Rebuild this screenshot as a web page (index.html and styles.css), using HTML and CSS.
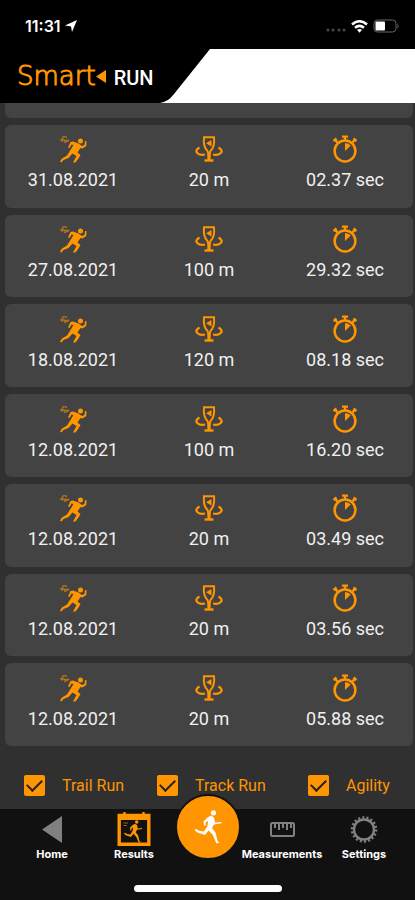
FILE: index.html
```
<!DOCTYPE html>
<html lang="en">
<head>
    <meta charset="UTF-8">
    <meta name="viewport" content="width=device-width, initial-scale=1.0">
    <title>Smart Run - Results</title>
    <link rel="stylesheet" href="styles.css">
</head>
<body>
    <!-- Shared icons -->
    <svg class="sprite" aria-hidden="true">
        <symbol id="runner" viewBox="0 0 28 28">
            <circle cx="21.500" cy="6" r="2.500" fill="currentColor"/>
            <path d="M11.500 7L14 6.500L19.500 8.500L23 11L25.500 10L26 6L27.500 6.300L27.300 11L23.500 13.500L21.500 13L18.500 17.500L21.500 20L19.500 23.500L16.500 27.500L14 27.500L17.500 21L13.500 18.500L9.500 23L4.500 25L2.500 27.500L1 26.500L3 23.500L8 20.500L11.500 15L14.500 10L12.500 9.500L10.500 13L9 12.500Z" fill="currentColor"/>
            <path d="M8 2.500Q4 .500 3.500 3T7 5.500T5 7.500M1.500 4Q2 6 4 6M9.500 4.500V6.500" fill="none" stroke="currentColor" stroke-width="1.400" opacity=".6"/>
        </symbol>
        <symbol id="cup" viewBox="0 0 28 26">
            <path d="M9 1.200H19Q20 11 15.500 15Q14.600 16.500 14.600 23.500H13.400Q13.400 16.500 12.500 15Q8 11 9 1.200Z" fill="none" stroke="currentColor" stroke-width="2"/>
            <path d="M9.500 24.500H18.500" stroke="currentColor" stroke-width="2.400"/>
            <path d="M16.500 4V10.500L11 7.300Z" fill="currentColor"/>
            <path d="M4.500 11.500Q-.500 14.500 2.500 17.200Q5 19.500 10 18.500M23.500 11.500Q28.500 14.500 25.500 17.200Q23 19.500 18 18.500" fill="none" stroke="currentColor" stroke-width="2.200"/>
        </symbol>
        <symbol id="timer" viewBox="0 0 26 28">
            <circle cx="13" cy="16" r="10.400" fill="none" stroke="currentColor" stroke-width="2.500"/>
            <path d="M13 16V8A8 8 0 0 1 18.800 10.500Z" fill="currentColor"/>
            <path d="M10 1.700H16M13 1.700V5M1.500 6L4.500 3.500M24.500 6L21.500 3.500M3.500 5L5.500 7.500M22.500 5L20.500 7.500" fill="none" stroke="currentColor" stroke-width="2.300"/>
        </symbol>
        <symbol id="sprinter" viewBox="0 0 28 34">
            <circle cx="19.500" cy="2.800" r="2.600" fill="currentColor"/>
            <path d="M17 5.500L20 7.500L21 12.500L27.500 12V13.300L20 14.500L18 18L21.500 22.500L23.500 31L25.500 32.500L22.500 33.500L18.500 24.500L14.500 20.500L11 25L3.500 22.500L.500 20L2 19L5 20.700L10 21.500L13.500 16L14 11L11.500 12.500L11.800 15.500L10.300 16L9.500 11.500L13.500 7.500Z" fill="currentColor"/>
        </symbol>
    </svg>

    <header>
        <div class="status-bar">
            <span class="clock">11:31
                <svg width="12" height="12" viewBox="0 0 12 12"><path d="M12 0L7 12L6 6.500L0 5.500Z" fill="currentColor"/></svg>
            </span>
            <span class="signals">
                <svg width="20" height="4" viewBox="0 0 20 4" fill="#4a4a4a"><circle cx="2" cy="2" r="1.500"/><circle cx="7" cy="2" r="1.500"/><circle cx="13" cy="2" r="1.500"/><circle cx="18" cy="2" r="1.500"/></svg>
                <svg width="17" height="13" viewBox="0 0 17 13" fill="none" stroke="#fff" stroke-width="2.500"><path d="M1 4.500Q8.500-2 16 4.500M4 7.800Q8.500 4 13 7.800"/><path d="M6 9.800Q8.500 8 11 9.800L8.500 12.800Z" fill="#fff" stroke="none"/></svg>
                <svg width="27" height="14" viewBox="0 0 27 14"><rect x="1" y="1" width="22" height="12" rx="3.500" fill="none" stroke="#666"/><rect x="2.500" y="2.500" width="9.500" height="9" rx="1" fill="#fff"/><path d="M24.500 4Q26.500 7 24.500 10Z" fill="#666"/></svg>
            </span>
        </div>
        <div class="banner">
            <h1 class="logo">
                <span class="logo-smart">Smart</span>
                <svg width="10" height="13" viewBox="0 0 10 13"><path d="M10 0V13L0 6.500Z" fill="#ff9500"/></svg>
                <span class="logo-run">RUN</span>
            </h1>
            <svg class="slant" width="50" height="54" viewBox="0 0 50 54"><path d="M0 0H50L14 45Q8 53 0 54Z"/></svg>
        </div>
    </header>

    <main>
        <ul class="results">
            <li class="card card-cut"></li>
            <li class="card">
                <div class="cell"><svg class="icon"><use href="#runner"/></svg>31.08.2021</div>
                <div class="cell"><svg class="icon"><use href="#cup"/></svg>20 m</div>
                <div class="cell"><svg class="icon"><use href="#timer"/></svg>02.37 sec</div>
            </li>
            <li class="card">
                <div class="cell"><svg class="icon"><use href="#runner"/></svg>27.08.2021</div>
                <div class="cell"><svg class="icon"><use href="#cup"/></svg>100 m</div>
                <div class="cell"><svg class="icon"><use href="#timer"/></svg>29.32 sec</div>
            </li>
            <li class="card">
                <div class="cell"><svg class="icon"><use href="#runner"/></svg>18.08.2021</div>
                <div class="cell"><svg class="icon"><use href="#cup"/></svg>120 m</div>
                <div class="cell"><svg class="icon"><use href="#timer"/></svg>08.18 sec</div>
            </li>
            <li class="card">
                <div class="cell"><svg class="icon"><use href="#runner"/></svg>12.08.2021</div>
                <div class="cell"><svg class="icon"><use href="#cup"/></svg>100 m</div>
                <div class="cell"><svg class="icon"><use href="#timer"/></svg>16.20 sec</div>
            </li>
            <li class="card">
                <div class="cell"><svg class="icon"><use href="#runner"/></svg>12.08.2021</div>
                <div class="cell"><svg class="icon"><use href="#cup"/></svg>20 m</div>
                <div class="cell"><svg class="icon"><use href="#timer"/></svg>03.49 sec</div>
            </li>
            <li class="card">
                <div class="cell"><svg class="icon"><use href="#runner"/></svg>12.08.2021</div>
                <div class="cell"><svg class="icon"><use href="#cup"/></svg>20 m</div>
                <div class="cell"><svg class="icon"><use href="#timer"/></svg>03.56 sec</div>
            </li>
            <li class="card">
                <div class="cell"><svg class="icon"><use href="#runner"/></svg>12.08.2021</div>
                <div class="cell"><svg class="icon"><use href="#cup"/></svg>20 m</div>
                <div class="cell"><svg class="icon"><use href="#timer"/></svg>05.88 sec</div>
            </li>
        </ul>

        <form class="filters">
            <label><input type="checkbox" checked>Trail Run</label>
            <label><input type="checkbox" checked>Track Run</label>
            <label><input type="checkbox" checked>Agility</label>
        </form>
    </main>

    <footer>
        <nav>
            <a href="#home">
                <svg width="34" height="34" viewBox="0 0 34 34"><path d="M27 4V31L7 17.500Z" fill="#808080"/></svg>
                Home
            </a>
            <a href="#results">
                <svg class="orange" width="34" height="34" viewBox="0 0 34 34">
                    <path d="M2.200 3.500H31.800V32.300H2.200Z" fill="none" stroke="currentColor" stroke-width="3.400"/>
                    <path d="M1 2.500H33V8H1Z" fill="currentColor"/>
                    <path d="M7.500 0V4M26.500 0V4" stroke="currentColor" stroke-width="2.400"/>
                    <path d="M6.500 11H11M6.500 13.500H10" stroke="currentColor" opacity=".6"/>
                    <use href="#sprinter" x="6" y="8" width="20" height="23"/>
                </svg>
                Results
            </a>
            <button class="start" type="button" aria-label="Start run">
                <svg width="28" height="34"><use href="#sprinter"/></svg>
            </button>
            <a href="#measurements">
                <svg width="34" height="34" viewBox="0 0 34 34" fill="none" stroke="#808080" stroke-width="2"><rect x="6" y="11" width="23" height="13" rx="1.500"/><path d="M10 12V16M14 12V18M18 12V16M22 12V18M26 12V16"/></svg>
                Measurements
            </a>
            <a href="#settings">
                <svg width="34" height="34" viewBox="0 0 34 34" fill="none" stroke="#808080"><circle cx="17" cy="17.500" r="10" stroke-width="2.400"/><circle cx="17" cy="17.500" r="12" stroke-width="2.600" stroke-dasharray="2 2.189"/></svg>
                Settings
            </a>
        </nav>
        <div class="home-bar"></div>
    </footer>
</body>
</html>
```
FILE: styles.css
```
* {
    box-sizing: border-box;
}
body {
    font-family: Roboto, "Liberation Sans", sans-serif;
    margin: 0;
    min-height: 100vh;
    display: flex;
    flex-direction: column;
    background-color: #303030;
    color: #f0f0f0;
}
.sprite {
    display: none;
}

/* Header */
.status-bar {
    display: flex;
    justify-content: space-between;
    align-items: center;
    height: 49px;
    padding: 3px 15px 0 25px;
    background-color: #000;
    color: #fff;
}
.clock {
    font: 600 16px Inter, sans-serif;
}
.signals {
    display: flex;
    align-items: center;
    gap: 5px;
}
.signals svg:first-child {
    margin-top: 8px;
}
.banner {
    display: flex;
    height: 54px;
    background-color: #fff;
}
.logo {
    display: flex;
    align-items: center;
    width: 160px;
    margin: 0;
    padding: 0 0 0 17px;
    background-color: #000;
}
.logo-smart {
    font: 200 26px "DejaVu Sans", sans-serif;
    -webkit-text-stroke: 1px #ff9500;
    color: #ff9500;
}
.logo-run {
    margin-left: 8px;
    padding-top: 3px;
    font: 500 20px Roboto, sans-serif;
    color: #fff;
}

/* Results list */
main {
    flex: 1;
    display: flex;
    flex-direction: column;
}
.results {
    flex: 1;
    display: flex;
    flex-direction: column;
    gap: 7px;
    margin: 0;
    padding: 0 2px 0 5px;
    list-style: none;
}
.card {
    flex: 1;
    display: grid;
    grid-template-columns: repeat(3, 1fr);
    align-items: center;
    border-radius: 6px;
    background-color: #434343;
}
.card-cut {
    flex: 0 0 15px;
    border-radius: 0 0 6px 6px;
}
.cell {
    display: flex;
    flex-direction: column;
    align-items: center;
    gap: 5px;
    padding-bottom: 5px;
    font-size: 18px;
    line-height: 24px;
}
.icon {
    width: 28px;
    height: 28px;
    color: #ff9500;
}

/* Filters */
.filters {
    display: grid;
    grid-template-columns: 133fr 151fr 107fr;
    padding: 29px 0 13px 24px;
}
.filters label {
    display: flex;
    align-items: center;
    gap: 17px;
    font-size: 16px;
    line-height: 21px;
    color: #ff9500;
}
.filters input {
    appearance: none;
    display: grid;
    place-items: center;
    width: 21px;
    height: 21px;
    margin: 0;
    border-radius: 2px;
    background-color: #ff9500;
}
.filters input:checked::before {
    content: "";
    width: 13px;
    height: 7px;
    margin-bottom: 4px;
    border: solid #222;
    border-width: 0 0 2px 2px;
    transform: rotate(-45deg);
}

/* Bottom navigation */
footer {
    padding-bottom: 8px;
    background-color: #111;
}
nav {
    display: grid;
    grid-template-columns: 1fr 1fr 66px 1fr 1fr;
    height: 76px;
    padding: 3px 10px 0 11px;
}
nav a {
    display: flex;
    flex-direction: column;
    align-items: center;
    font: 700 11px/16px Inter, sans-serif;
    color: #fff;
    text-decoration: none;
}
.orange {
    color: #ff9500;
}
.start {
    display: grid;
    place-items: center;
    width: 66px;
    height: 66px;
    margin-top: -18px;
    padding: 0;
    border: 2px solid #111;
    border-radius: 50%;
    background-color: #ff9500;
    color: #fff;
}
.home-bar {
    width: 148px;
    height: 7px;
    margin: 0 auto;
    border-radius: 4px;
    background-color: #fff;
}
```
